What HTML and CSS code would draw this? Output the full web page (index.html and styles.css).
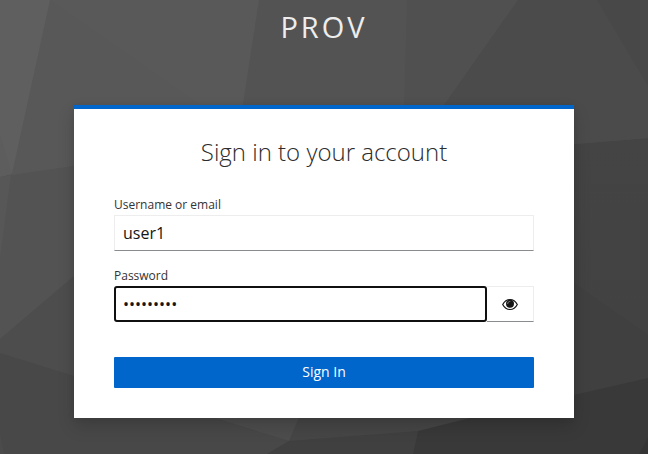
FILE: index.html
```html
<!DOCTYPE html>
<html lang="en">
<head>
<meta charset="utf-8">
<title>Sign in</title>
<link rel="stylesheet" href="styles.css">
</head>
<body>
<svg class="backdrop" viewBox="0 0 648 454" preserveAspectRatio="none" aria-hidden="true">
  <defs>
    <linearGradient id="right" x1="0" y1="0" x2="0" y2="1"><stop offset="0" stop-color="#444"/><stop offset="1" stop-color="#414141"/></linearGradient>
  </defs>
  <rect width="648" height="454" fill="#535353"/>
  <path fill="#464646" d="M200 400H648V454H200z"/>
  <path fill="#595959" d="M40 0H259L242 110 180 150 12 175z"/>
  <path fill="#585858" d="M50 0L200 105 140 153 12 175z"/>
  <path fill="#5f5f5f" d="M0 0H50L12 174 0 177z"/>
  <path fill="#5d5d5d" d="M0 135L12 174 0 177z"/>
  <path fill="#575757" d="M0 177L11 175 0 258z"/>
  <path fill="#505050" d="M407 0H520L442 110H404z"/>
  <path fill="#4b4b4b" d="M518 0H648V138L574 144 430 125z"/>
  <path fill="#484848" d="M597 0H648V86z"/>
  <path fill="url(#right)" d="M574 144L648 138V380L574 397 400 410 300 300z"/>
  <path fill="#404040" d="M574 283L648 335V380L574 397z"/>
  <path fill="#4d4d4d" d="M0 339L74 276 300 300V410H180L0 355z"/>
  <path fill="#484848" d="M0 353L74 376 214 418 289 441 267 454H0z"/>
  <path fill="#4b4b4b" d="M0 433V454H4z"/>
  <path fill="#4d4d4d" d="M205 415H300L289 441z"/>
  <path fill="#404040" d="M289 441L418 431 413 454H267z"/>
  <path fill="#393939" d="M418 431L470 418 574 395 648 378V454H413z"/>
  <path fill="#343434" d="M648 438V454H639z"/>
</svg>
<div class="page">
  <header class="realm">Prov</header>
  <main class="card">
    <h1 class="title">Sign in to your account</h1>
    <form>
      <label class="label" for="username">Username or email</label>
      <input class="field" id="username" type="text" value="user1">
      <label class="label" for="password">Password</label>
      <div class="group">
        <input class="field secret" id="password" type="text" value="•••••••••">
        <button class="reveal" type="button" aria-label="Show password">
          <svg class="eye" viewBox="0 0 16 12" aria-hidden="true">
            <path class="lid" d="M.7 6C4.2-.65 11.8-.65 15.3 6 11.8 12.65 4.2 12.65.7 6z"/>
            <circle cx="8" cy="5.3" r="4"/>
            <path class="glint" d="M5.7 5.1C5.7 3.8 6.6 2.9 7.9 2.9"/>
          </svg>
        </button>
      </div>
      <button class="submit" type="button">Sign In</button>
    </form>
  </main>
</div>
</body>
</html>
```
FILE: styles.css
```css
* { box-sizing: border-box; }

body {
  margin: 0;
  height: 454px;
  overflow: hidden;
  background: #4a4a4a;
  color: #151515;
  font-family: "Open Sans", sans-serif;
}

.backdrop {
  position: absolute;
  inset: 0;
  width: 100%;
  height: 100%;
}

.page {
  position: relative;
  display: flex;
  flex-direction: column;
  align-items: center;
}

.realm {
  height: 105px;
  padding: 7px 0 0;
  color: #ededed;
  font-size: 29px;
  font-weight: 400;
  line-height: 40px;
  letter-spacing: 3px;
  text-transform: uppercase;
}

.card {
  width: 500px;
  height: 313px;
  padding: 26px 40px 30px;
  border-top: 4px solid #06c;
  background: #fff;
  box-shadow: 0 8px 16px rgba(3, 3, 3, .16), 0 0 6px rgba(3, 3, 3, .08);
}

.title {
  margin: 0 0 26px;
  height: 34px;
  color: #2c2c2c;
  font-size: 24px;
  font-weight: 300;
  line-height: 34px;
  text-align: center;
}

.label {
  display: block;
  height: 20px;
  font-size: 12px;
  line-height: 19px;
  color: #333;
}

.field {
  display: block;
  width: 100%;
  height: 36px;
  margin: 0 0 15px;
  padding: 0 8px;
  border: 1px solid #ededed;
  border-bottom-color: #8a8d90;
  border-radius: 0;
  outline: 0;
  background: #fff;
  color: #151515;
  font: 16px "Open Sans", sans-serif;
}

.group { display: flex; height: 36px; }

.secret {
  width: 373px;
  padding: 0 7px;
  border: 2px solid #101010;
  border-radius: 3px;
}

.reveal {
  display: flex;
  flex: 1;
  align-items: center;
  justify-content: center;
  padding: 1px 0 0;
  border: 1px solid #ededed;
  border-left: 0;
  border-bottom-color: #8a8d90;
  background: #fff;
}

.eye { width: 16px; height: 13px; fill: #151515; }
.lid { fill: none; stroke: #151515; stroke-width: 1.2; }
.glint { fill: none; stroke: #aaa; stroke-width: .7; stroke-linecap: round; }

.submit {
  display: block;
  width: 100%;
  height: 31px;
  margin-top: 35px;
  padding: 0 0 2px;
  border: 0;
  border-radius: 1px;
  background: #06c;
  color: #fff;
  font: 14px/29px "Open Sans", sans-serif;
}
```
